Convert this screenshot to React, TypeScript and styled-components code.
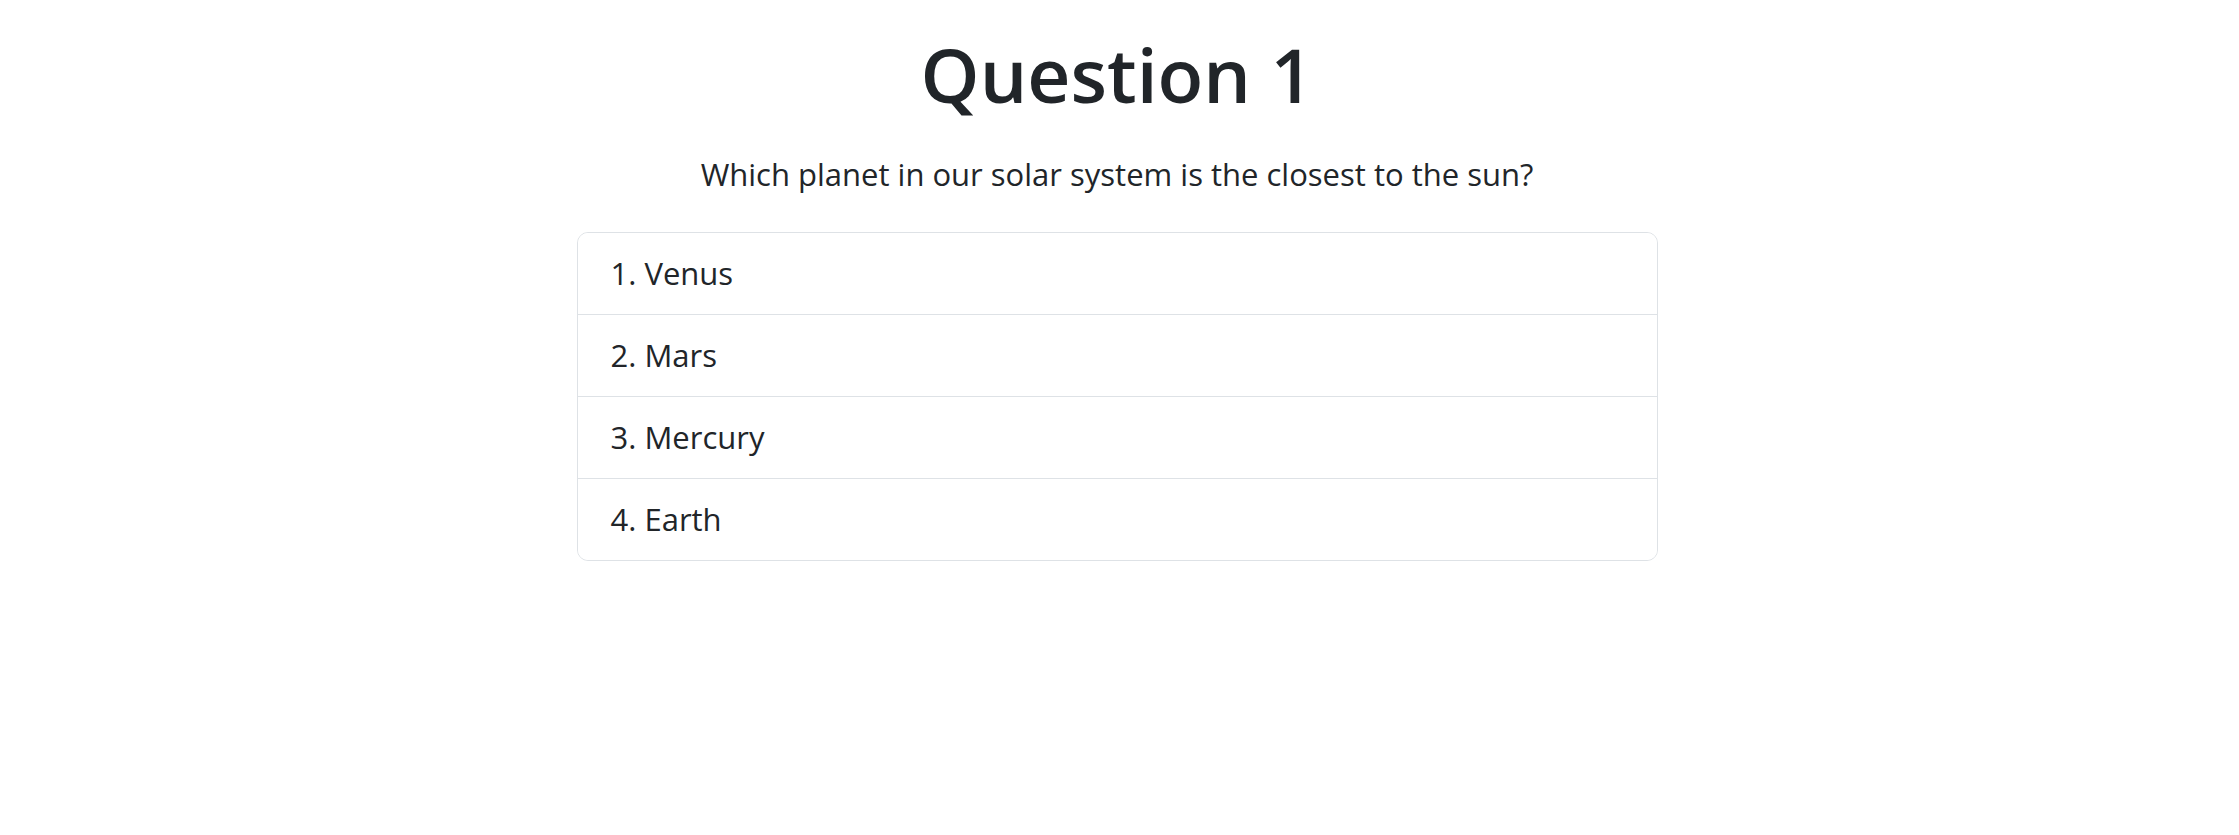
import React from "react";
import styled, { createGlobalStyle } from "styled-components";

const GlobalStyle = createGlobalStyle`
  html, body {
    margin: 0;
    padding: 0;
    background: #ffffff;
  }
  body {
    font-family: "Open Sans", "Noto Sans", sans-serif;
    color: #212529;
  }
`;

const Page = styled.main`
  display: flex;
  flex-direction: column;
  align-items: center;
  padding: 27px 5px 0 0;
`;

const Title = styled.h1`
  margin: 0;
  font-size: 75px;
  font-weight: 600;
  line-height: 94px;
  color: #212529;
  text-align: center;
`;

const Prompt = styled.p`
  margin: 29px 0 34px;
  font-size: 31px;
  line-height: 48px;
  text-align: center;
`;

const OptionList = styled.ol`
  list-style: none;
  margin: 0;
  padding: 0;
  width: 1079px;
  border: 1px solid #dee2e6;
  border-radius: 11px;
  overflow: hidden;
`;

const OptionItem = styled.li`
  padding: 16px 33px;
  font-size: 31px;
  line-height: 49px;
  color: #212529;
  background: #ffffff;
  & + & {
    border-top: 1px solid #dee2e6;
  }
`;

const options = ["Venus", "Mars", "Mercury", "Earth"];

export default function App() {
  return (
    <>
      <GlobalStyle />
      <Page>
        <Title>Question 1</Title>
        <Prompt>Which planet in our solar system is the closest to the sun?</Prompt>
        <OptionList>
          {options.map((o, i) => (
            <OptionItem key={o}>
              {i + 1}. {o}
            </OptionItem>
          ))}
        </OptionList>
      </Page>
    </>
  );
}
